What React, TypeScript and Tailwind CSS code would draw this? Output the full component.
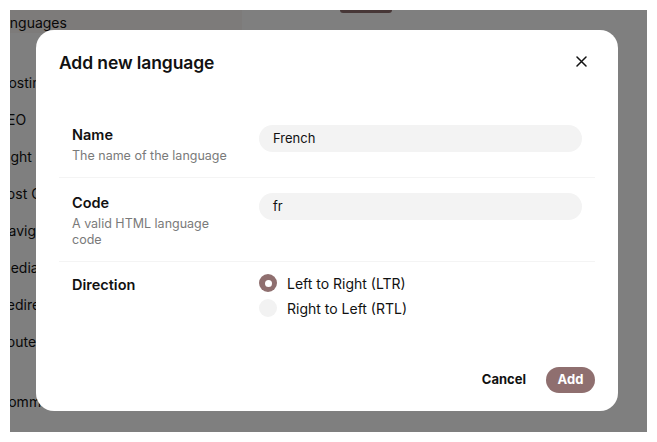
import React from "react";

const items = [
  { t: "Hosting" },
  { t: "SEO" },
  { t: "Right & Privacy" },
  { t: "Post Code" },
  { t: "Navigation" },
  { t: "Media" },
  { t: "Redirects" },
  { t: "Routes" },
];

function Row({ label, desc, children, last }: { label: string; desc?: string; children: React.ReactNode; last?: boolean }) {
  return (
    <div className={`flex px-[13px] pb-[13px] ${last ? "pt-[13px]" : "pt-[15px] border-b border-[#f4f4f4]"}`}>
      <div className="w-[187px] shrink-0">
        <div className="text-[14.5px] font-semibold leading-[20px] text-[#111]">{label}</div>
        {desc && <div className="mt-[3px] text-[12.5px] leading-[16px] text-[#7a7a7a] pr-[20px]">{desc}</div>}
      </div>
      <div className="flex-1">{children}</div>
    </div>
  );
}

export default function App() {
  return (
    <div className="w-[657px] h-[442px] bg-white overflow-hidden" style={{ fontFamily: "Inter, 'Noto Sans', sans-serif" }}>
      <div className="ml-[10px] mt-[10px] w-[637px] h-[422px] relative overflow-hidden bg-white">
        {/* underlying page */}
        <div className="flex h-full">
          <div className="w-[232px] h-full flex flex-col">
            <div className="h-[23px] pt-[2px] bg-[#fbf6f5] text-[14px] leading-[21px] text-[#111] -ml-[16px] w-[248px]">Languages</div>
            <div className="-ml-[12px] text-[14px] text-[#111] flex flex-col">
              {items.map((it) => (
                <div key={it.t} className="h-[37px] leading-[37px] whitespace-nowrap first:mt-[31px]">{it.t}</div>
              ))}
              <div className="h-[37px] leading-[37px] mt-[23px]">Commerce</div>
            </div>
          </div>
          <div className="flex-1 relative">
            <div className="ml-[98px] w-[52px] h-[3px] rounded-b-full bg-[#8f6f6f]" />
          </div>
        </div>
        {/* overlay */}
        <div className="absolute inset-0 bg-black/50" />
        {/* modal */}
        <div className="absolute left-[26px] top-[20px] w-[582px] h-[381px] bg-white rounded-[18px] flex flex-col">
          <div className="flex items-center justify-between pl-[23px] pr-[31px] pt-[21px] h-[45px]">
            <h2 className="text-[17.5px] font-semibold text-[#111] leading-[24px] tracking-[-0.1px]">Add new language</h2>
            <svg width="11" height="11" viewBox="0 0 11 11" className="mt-[-4px]">
              <path d="M1 1 L10 10 M10 1 L1 10" stroke="#111" strokeWidth="1.5" strokeLinecap="round" />
            </svg>
          </div>
          <div className="mx-[23px] mt-[35px] flex flex-col">
            <Row label="Name" desc="The name of the language">
              <div className="h-[27px] rounded-full bg-[#f3f3f3] px-[14px] flex items-center text-[13px] text-[#111]">French</div>
            </Row>
            <Row label="Code" desc="A valid HTML language code">
              <div className="h-[27px] rounded-full bg-[#f3f3f3] px-[14px] flex items-center text-[13px] text-[#111]">fr</div>
            </Row>
            <Row label="Direction" last>
              <div className="flex flex-col gap-[7px] -mt-[1px]">
                <div className="flex items-center gap-[10px] h-[18px]">
                  <span className="w-[18px] h-[18px] rounded-full bg-[#8f6f6f] flex items-center justify-center">
                    <span className="w-[7px] h-[7px] rounded-full bg-white" />
                  </span>
                  <span className="text-[14px] text-[#111]">Left to Right (LTR)</span>
                </div>
                <div className="flex items-center gap-[10px] h-[18px]">
                  <span className="w-[18px] h-[18px] rounded-full bg-[#f2f2f2]" />
                  <span className="text-[14px] text-[#111]">Right to Left (RTL)</span>
                </div>
              </div>
            </Row>
          </div>
          <div className="mt-auto mb-[18px] flex items-center justify-end gap-[20px] pr-[23px]">
            <span className="text-[13px] font-bold text-[#111]">Cancel</span>
            <span className="h-[26px] w-[49px] rounded-full bg-[#8f6f6f] text-white text-[13px] font-bold flex items-center justify-center">Add</span>
          </div>
        </div>
      </div>
    </div>
  );
}
